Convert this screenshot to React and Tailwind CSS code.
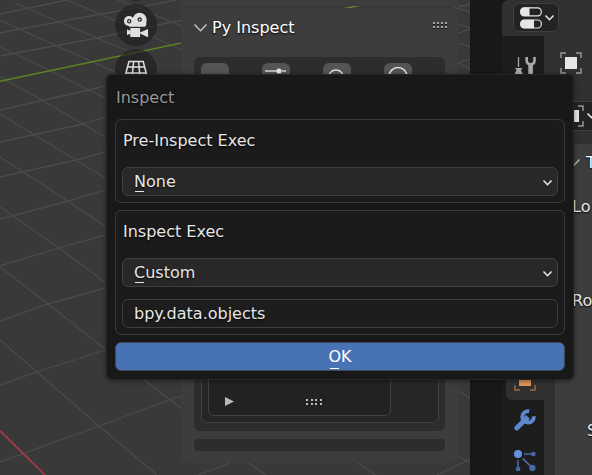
import React from "react";

const gridLines = [
  "0,340 37,372 99,426 157,475",
  "0,267 48,304 105,349 144,380 182,409",
  "0,207 59,248 105,282",
  "0,157 68,201 105,226",
  "0,114 33,134 76,160 105,178",
  "0,77 40,99 83,124 105,137",
  "0,47 47,69 89,90 110,101",
  "0,20 52,44 93,62 115,72",
  "15,3 57,21 97,38 133,53",
  "67,0 100,14 133,28 182,50",
  "0,462 99,426 169,400 182,396",
  "0,385 37,372 105,350",
  "0,321 48,304 105,288",
  "0,266 59,248 105,235",
  "0,219 68,201 105,190",
  "0,177 76,160 105,152",
  "0,142 83,124 105,117",
  "0,110 89,90 105,86",
  "0,56 97,38 182,20",
  "0,33 63,21 113,12 176,0",
  "0,14 67,0",
  "118,0 182,26",
  "453,7 470,12",
  "458,7 470,4",
  "458,24 470,28",
  "458,33 470,29",
  "458,43 470,47",
  "458,63 470,59",
  "458,63 470,69",
  "198,475 230,463",
  "248,463 266,475",
  "358,463 376,475",
  "437,475 470,459",
  "458,456 470,463",
  "458,391 470,398",
];

function ViewportGrid() {
  return (
    <svg
      className="absolute left-0 top-0"
      width="470"
      height="475"
      viewBox="0 0 470 475"
      fill="none"
      aria-hidden="true"
    >
      {gridLines.map((points) => (
        <polyline key={points} points={points} stroke="#4b4b4b" strokeWidth="1.3" />
      ))}
      <path d="M0 81.3 385 0" stroke="#5d8323" strokeWidth="1.6" />
      <path d="M0 430.7 45 475" stroke="#a53a4a" strokeWidth="1.7" />
    </svg>
  );
}

function Chevron({ className = "" }) {
  return (
    <svg className={className} width="11" height="8" viewBox="0 0 11 8" fill="none" aria-hidden="true">
      <path d="M1.5 1.5 5.5 5.7 9.5 1.5" stroke="#e6e6e6" strokeWidth="1.6" />
    </svg>
  );
}

function CameraIcon() {
  return (
    <svg width="42" height="42" viewBox="0 0 42 42" aria-hidden="true">
      <g fill="#e0e0e0">
        <circle cx="14" cy="17" r="5.1" />
        <circle cx="24.7" cy="15.6" r="6.9" />
        <path d="M14 16h17.3v4.3q0 2.4-2 2.4H14z" />
        <rect x="15.3" y="24" width="9.8" height="9" rx="0.6" />
        <path d="M25 28.4 33 25v8.2l-8-3.6z" />
        <path d="M12 25.2l1.6 1h2v4h-2l-1.6 1z" />
      </g>
      <g fill="#e0e0e0" stroke="#2c2c2c" strokeWidth="1.3">
        <circle cx="14.2" cy="17.2" r="1.6" />
        <circle cx="24.7" cy="15.6" r="1.6" />
      </g>
    </svg>
  );
}

function PerspectiveIcon() {
  return (
    <svg width="42" height="42" viewBox="0 0 42 42" fill="none" stroke="#e0e0e0" strokeWidth="1.5" aria-hidden="true">
      <path d="M14 12.5h14.2L33 31H9zM12.6 18h17M11 24h20.6M18.6 12.5 16.8 31M23.6 12.5 25.2 31" />
    </svg>
  );
}

function ObjectIcon({ square, corner }) {
  return (
    <svg width="22" height="22" viewBox="0 0 22 22" fill="none" aria-hidden="true">
      <rect x="5" y="5" width="12" height="12" fill={square} />
      <path d="M1 6V1h5M16 1h5v5M21 16v5h-5M6 21H1v-5" stroke={corner} strokeWidth="1.4" />
    </svg>
  );
}

function ToolIcon() {
  return (
    <svg width="22" height="22" viewBox="0 0 22 22" fill="none" aria-hidden="true">
      <path d="M4.5 1v10" stroke="#a8a8a8" strokeWidth="1.3" />
      <path d="M1 12h7.5l-1.6 2.2L8.5 17v4H1v-4l1.6-2.8z" fill="#a8a8a8" />
      <path d="M12.7 1v3.5q0 3.7 3.9 3.7t3.9-3.7V1" stroke="#a8a8a8" strokeWidth="2.6" />
      <path d="M16.6 7v14" stroke="#a8a8a8" strokeWidth="4.6" />
    </svg>
  );
}

function WrenchIcon() {
  return (
    <svg width="22" height="22" viewBox="0 0 22 22" fill="none" stroke="#5f87d0" aria-hidden="true">
      <path d="M2.8 19 11 10.8" strokeWidth="4.8" strokeLinecap="round" />
      <path d="M15.2 2.2A5.8 5.8 0 1 0 19.8 7.2" strokeWidth="3.8" />
      <path d="M10.5 7.5l4 4" strokeWidth="4" />
    </svg>
  );
}

function ParticlesIcon() {
  return (
    <svg width="22" height="23" viewBox="156 328 66 69" aria-hidden="true">
      <path d="M186 343h22M168 360v22M182 356l22 22" stroke="#4a68a6" strokeWidth="5" />
      <circle cx="168" cy="343" r="12" fill="#6590e0" />
      <circle cx="214" cy="343" r="7" fill="#4a68a6" />
      <circle cx="168" cy="388" r="7" fill="#4a68a6" />
      <circle cx="211" cy="385" r="9.5" fill="#4a68a6" />
    </svg>
  );
}

function ToggleListIcon() {
  return (
    <svg width="22" height="22" viewBox="0 0 22 22" aria-hidden="true">
      <rect x="0.7" y="0.8" width="20.6" height="8" rx="3.6" fill="#232323" stroke="#e6e6e6" strokeWidth="1.2" />
      <path d="M9.5.5H4.3Q.3.5.3 4.8t4 4.3h5.2z" fill="#e6e6e6" />
      <rect x="0.7" y="13" width="20.6" height="8" rx="3.6" fill="#232323" stroke="#e6e6e6" strokeWidth="1.2" />
      <path d="M14 12.7H4.3q-4 0-4 4.3t4 4.3H14z" fill="#e6e6e6" />
    </svg>
  );
}

function GripIcon() {
  return (
    <svg width="14" height="8" viewBox="0 0 14 8" aria-hidden="true">
      {[0, 4, 8, 12].map((x) => (
        <g key={x}>
          <rect x={x} y="0" width="2" height="2" fill="#a8a8a8" />
          <rect x={x} y="2" width="2" height="1" fill="#111" />
          <rect x={x} y="4" width="2" height="2" fill="#a8a8a8" />
          <rect x={x} y="6" width="2" height="1" fill="#111" />
        </g>
      ))}
    </svg>
  );
}

function GizmoButton({ label, children }) {
  return (
    <button type="button" aria-label={label} className="size-[42px] shrink-0 rounded-full bg-[#1d1d1d]/60">
      {children}
    </button>
  );
}

function IconButton({ label, children }) {
  return (
    <button
      type="button"
      aria-label={label}
      className="flex h-7 w-7 items-start justify-center rounded-md bg-[#545454]"
    >
      {children}
    </button>
  );
}

function SidePanel() {
  return (
    <aside className="relative flex h-[463px] w-[277px] shrink-0 flex-col gap-0.5">
      <div className="h-1.5 rounded-b bg-[#3d3d3d]" />
      <section className="flex min-h-0 flex-1 flex-col rounded-md bg-[#3d3d3d] px-[13px] pb-3">
        <header className="flex h-[49px] shrink-0 items-start justify-between pt-2">
          <h2 className="flex items-center gap-[5px] text-base leading-6 text-white [text-shadow:0_1px_2px_#000]">
            <svg width="13" height="9" viewBox="0 0 13 9" fill="none" aria-hidden="true">
              <path d="M.5 .5 6.5 6.7 12.5 .5" stroke="#c4c4c4" strokeWidth="1.5" />
            </svg>
            Py Inspect
          </h2>
          <span className="-mr-0.5 pt-1.5">
            <GripIcon />
          </span>
        </header>
        <div className="flex min-h-0 flex-1 flex-col justify-between rounded-md bg-[#2d2d2d] px-[7px] pb-2 pt-1.5">
          <div className="flex gap-[33px]">
            <IconButton label="Blank" />
            <IconButton label="Settings">
              <svg width="22" height="22" viewBox="0 0 22 22" aria-hidden="true">
                <path d="M0 8h12M17 8h4M0 15h5M9 15h12" stroke="#d6d6d6" strokeWidth="1.3" />
                <circle cx="14" cy="8" r="2.6" fill="#e6e6e6" />
                <circle cx="7" cy="15" r="2.6" fill="#e6e6e6" />
              </svg>
            </IconButton>
            <IconButton label="Search">
              <svg width="22" height="24" viewBox="0 0 22 24" fill="none" aria-hidden="true">
                <circle cx="10" cy="14.5" r="7.5" stroke="#e0e0e0" strokeWidth="1.6" />
              </svg>
            </IconButton>
            <IconButton label="Info">
              <svg width="22" height="24" viewBox="0 0 22 24" fill="none" aria-hidden="true">
                <circle cx="11" cy="13.5" r="9" stroke="#e0e0e0" strokeWidth="1.5" />
              </svg>
            </IconButton>
          </div>
          <div className="-mr-px rounded-md border border-[#3f3f3f] bg-[#262626] pb-1.5 pl-1.5 pr-[47px]">
            <div className="flex h-20 items-end rounded-md border border-[#414141] bg-[#222222] px-4 pb-[9px]">
              <svg width="9" height="9" viewBox="0 0 9 9" aria-label="Show filter">
                <path d="M0 0 9 4.5 0 9z" fill="#b8b8b8" />
              </svg>
              <svg className="ml-[72px]" width="17" height="7" viewBox="0 0 17 7" aria-hidden="true">
                <path
                  d="M0 0h2v2H0zM5 0h2v2H5zM9 0h2v2H9zM14 0h2v2H14zM0 4h2v2H0zM5 4h2v2H5zM9 4h2v2H9zM14 4h2v2H14z"
                  fill="#bcbcbc"
                />
              </svg>
            </div>
          </div>
        </div>
        <div className="mt-2 h-3 shrink-0 rounded bg-[#2d2d2d]" />
      </section>
    </aside>
  );
}

function Viewport() {
  return (
    <main className="relative flex min-w-0 flex-1 justify-end gap-6 overflow-hidden bg-[#393939] pr-3">
      <ViewportGrid />
      <div className="relative -mt-[41px] flex flex-col gap-[3px]">
        <GizmoButton label="Pan view" />
        <GizmoButton label="Toggle camera view">
          <CameraIcon />
        </GizmoButton>
        <GizmoButton label="Toggle perspective">
          <PerspectiveIcon />
        </GizmoButton>
      </div>
      <SidePanel />
    </main>
  );
}

function Tab({ label, active, children }) {
  return (
    <button
      type="button"
      aria-label={label}
      className={
        active
          ? "ml-1 flex h-10 shrink-0 items-center justify-center rounded-l-md bg-[#303030]"
          : "flex h-10 shrink-0 items-center justify-center pl-1"
      }
    >
      {children}
    </button>
  );
}

function Properties() {
  return (
    <aside className="flex w-[122px] shrink-0 flex-col overflow-hidden bg-[#181818] pl-8">
      <div className="flex min-h-0 flex-1 flex-col rounded-tl-md bg-[#303030]">
        <header className="h-9 shrink-0 pl-[11px] pt-[3px]">
          <button
            type="button"
            aria-label="Editor type"
            className="flex h-[29px] w-[46px] items-center gap-0.5 rounded-md border border-[#404040] bg-[#232323] pl-1.5"
          >
            <ToggleListIcon />
            <Chevron />
          </button>
        </header>
        <div className="flex min-h-0 flex-1">
          <nav className="flex w-[42px] shrink-0 flex-col overflow-hidden bg-[#1d1d1d] pt-[11px]">
            <Tab label="Tool">
              <ToolIcon />
            </Tab>
            <div className="h-[273px] shrink-0" />
            <Tab label="Object" active>
              <ObjectIcon square="#e0965a" corner="#a06a3e" />
            </Tab>
            <Tab label="Modifiers">
              <WrenchIcon />
            </Tab>
            <Tab label="Particles">
              <ParticlesIcon />
            </Tab>
          </nav>
          <div className="flex min-w-0 flex-1 flex-col overflow-hidden pt-4">
            <div className="ml-4 h-[22px]">
              <ObjectIcon square="#e6e6e6" corner="#9a9a9a" />
            </div>
            <button
              type="button"
              aria-label="Browse object"
              className="ml-3 mt-[27px] flex h-[30px] w-14 shrink-0 items-center gap-0.5 border-y border-[#404040] bg-[#232323] pl-1.5"
            >
              <ObjectIcon square="#e6e6e6" corner="#9a9a9a" />
              <Chevron />
            </button>
            <section className="ml-[11px] mt-[13px] flex-1 whitespace-nowrap bg-[#3d3d3d] text-base leading-5 text-[#e6e6e6] [text-shadow:0_1px_2px_#000]">
              <h3 className="flex items-center gap-1.5 pl-3 pt-[9px] text-white">
                <svg className="shrink-0" width="13" height="9" viewBox="0 0 13 9" fill="none" aria-hidden="true">
                  <path d="M.5 .5 6.5 6.7 12.5 .5" stroke="#b4b4b4" strokeWidth="1.5" />
                </svg>
                T
              </h3>
              <p className="mt-6 pl-[17px]">Lo</p>
              <p className="mt-[74px] pl-[17px]">Ro</p>
              <p className="mt-[110px] pl-8">S</p>
            </section>
          </div>
        </div>
      </div>
    </aside>
  );
}

function SelectField({ id, value }) {
  return (
    <div className="relative">
      <select
        id={id}
        defaultValue={value}
        className="block h-[29px] w-full appearance-none rounded-md border border-[#3e3e3e] bg-[#282828] px-[11px] text-base leading-5 text-[#e6e6e6] outline-none [text-shadow:0_1px_2px_#000]"
      >
        <option>{value}</option>
      </select>
      <span aria-hidden="true" className="absolute bottom-1 left-[13px] h-px w-[9px] bg-[#e6e6e6]" />
      <Chevron className="pointer-events-none absolute right-[5px] top-3" />
    </div>
  );
}

function InspectDialog() {
  return (
    <form
      role="dialog"
      aria-labelledby="inspect-title"
      className="absolute left-[106px] right-[18px] top-[74px] rounded-md border border-[#252525] bg-[#181818] px-2 pb-2 pt-[13px] text-base leading-5 text-[#e6e6e6] shadow-[0_1px_5px_rgba(0,0,0,0.45)] [text-shadow:0_1px_2px_#000]"
    >
      <h1 id="inspect-title" className="px-px text-[#989898]">
        Inspect
      </h1>
      <div className="mt-[11px] rounded-md border border-[#3a3a3a] bg-[#1b1b1b] px-1.5 pb-1.5 pt-[11px]">
        <label htmlFor="pre-exec" className="block px-px">
          Pre-Inspect Exec
        </label>
        <div className="mt-4">
          <SelectField id="pre-exec" value="None" />
        </div>
      </div>
      <div className="mt-[7px] rounded-md border border-[#3a3a3a] bg-[#1b1b1b] px-1.5 pb-1.5 pt-[11px]">
        <label htmlFor="exec" className="block px-px">
          Inspect Exec
        </label>
        <div className="mt-4 flex flex-col gap-3">
          <SelectField id="exec" value="Custom" />
          <input
            type="text"
            aria-label="Custom expression"
            defaultValue="bpy.data.objects"
            className="block h-[29px] w-full rounded-md border border-[#3e3e3e] bg-[#1d1d1d] px-[11px] text-base leading-5 text-[#e6e6e6] outline-none [text-shadow:0_1px_2px_#000]"
          />
        </div>
      </div>
      <button
        type="button"
        className="relative mt-[7px] flex h-[29px] w-full items-center justify-center rounded-md border border-[#3e4858] bg-[#4772b3] text-white"
      >
        <span className="relative">
          OK
          <span aria-hidden="true" className="absolute bottom-[-2px] left-0.5 h-px w-[9px] bg-white" />
        </span>
      </button>
    </form>
  );
}

export default function App() {
  return (
    <div className="relative flex h-screen overflow-hidden font-['DejaVu_Sans',sans-serif]">
      <Viewport />
      <Properties />
      <InspectDialog />
    </div>
  );
}
